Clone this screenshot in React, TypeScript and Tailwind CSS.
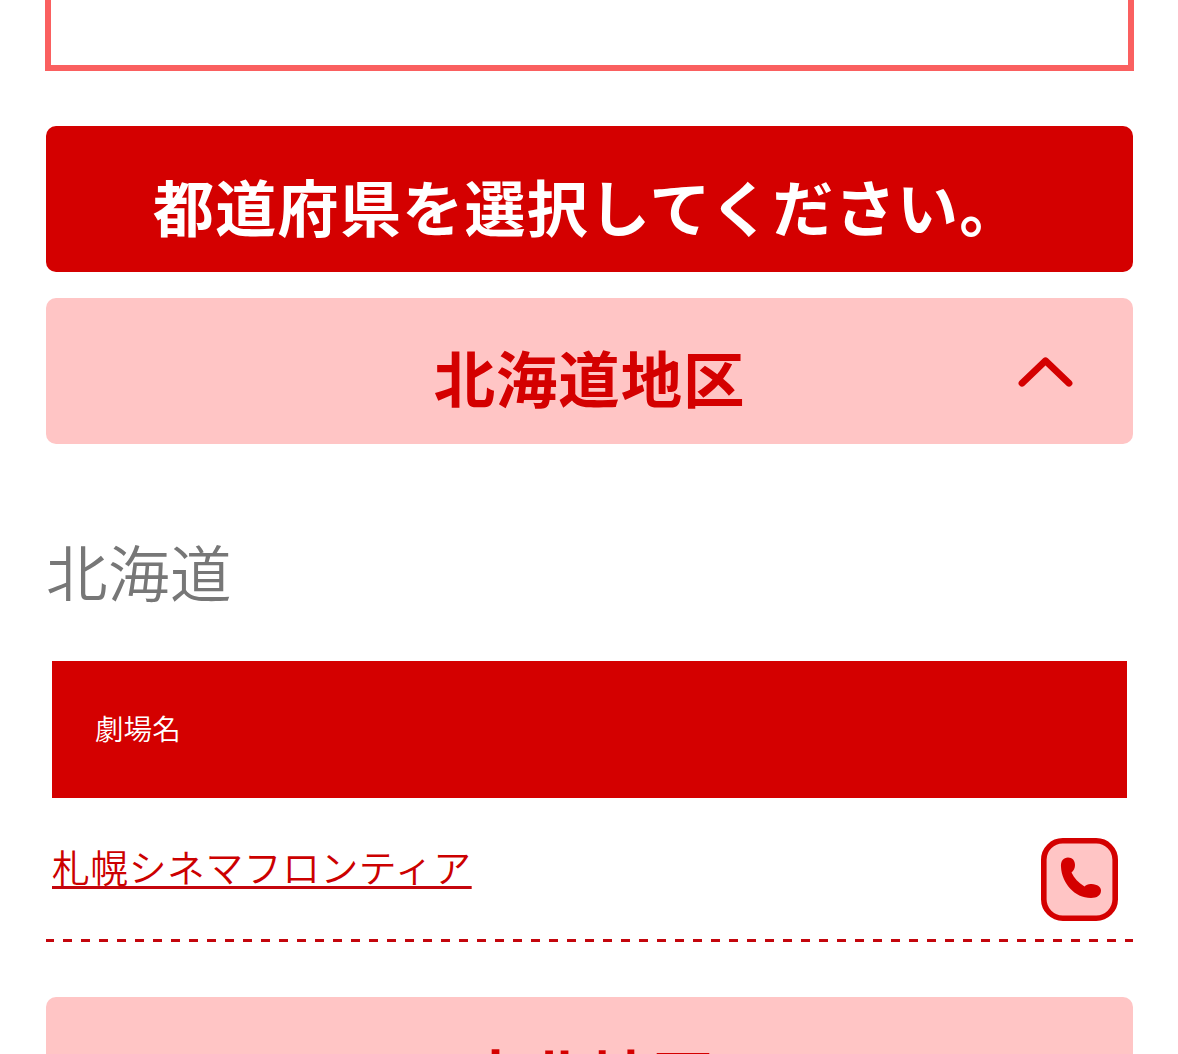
function ChevronUp() {
  return (
    <svg viewBox="0 0 56 32" className="h-[32px] w-[56px]" fill="none">
      <path d="M4 27.2 27.5 4.8 51 27.2" stroke="#d40000" strokeWidth="6.8" strokeLinecap="round" strokeLinejoin="round" />
    </svg>
  );
}

function PhoneIcon() {
  return (
    <svg viewBox="0 0 77 83" className="h-[83px] w-[77px]" fill="none">
      <rect x="2.8" y="2.8" width="71.4" height="77.4" rx="19" fill="#ffc5c5" stroke="#d40000" strokeWidth="5.6" />
      <path
        d="M20 29C19.5 23 22.5 19.5 27 19.5c4.500 0 7 3 7 7.500 0 3.500-1.200 5.500-3.500 7.500 2.500 5.500 7 10.500 13 14 1.500-1.800 4-2.700 7-2.500 6 .3 9.500 3 9.500 6.500 0 4.800-4 7.500-10 7.500C33.500 60 20.800 45 20 29Z"
        fill="#d40000"
      />
    </svg>
  );
}

function AreaHeading({ name, open = false }: { name: string; open?: boolean }) {
  return (
    <h2 className="grid h-[146px] grid-cols-[1fr_auto_1fr] rounded-[10px] bg-[#ffc5c5] text-[61.4px] leading-[158px] font-bold tracking-[0.9px] text-[#d40000]">
      <span />
      <span>{name}</span>
      {open && (
        <span className="flex justify-end pt-[58px] pr-[59px]">
          <ChevronUp />
        </span>
      )}
    </h2>
  );
}

export default function App() {
  return (
    <div className="h-[1054px] overflow-hidden bg-white pr-[45px] pl-[46px] font-['Noto_Sans_CJK_JP',sans-serif]">
      <div className="-mx-px h-[71px] border-6 border-t-0 border-[#fa6060]" />

      <h1 className="mt-[55px] h-[146px] rounded-[10px] bg-[#d40000] pl-[107px] text-[61px] leading-[160px] font-bold tracking-[1.3px] whitespace-nowrap text-white">
        都道府県を選択してください。
      </h1>

      <section className="mt-[26px]">
        <AreaHeading name="北海道地区" open />

        <h3 className="mt-[80px] h-[100px] text-[61.5px] leading-[94px] font-[350] tracking-[0.5px] text-[#777]">北海道</h3>

        <div className="mx-[6px] mt-[37px] h-[137px] bg-[#d40000] pl-[43px] text-[28.6px] leading-[134px] font-[350] text-white">
          劇場名
        </div>

        <div className="flex h-[141px] items-start justify-between pr-[15px] pl-[6px]">
          <a
            href="#"
            className="mt-[40px] text-[37.8px] leading-[56px] font-[350] tracking-[0.56px] text-[#cc0000] underline decoration-[#c4060d] decoration-[3px] underline-offset-[4px] [text-decoration-skip-ink:none]"
          >
            札幌シネマフロンティア
          </a>
          <a href="#" className="mt-[40px]">
            <PhoneIcon />
          </a>
        </div>
        <div className="h-[3px] bg-[repeating-linear-gradient(to_right,#c4060d_-1px,#c4060d_8px,transparent_8px,transparent_17px)]" />
      </section>

      <section className="mt-[55px]">
        <AreaHeading name="東北地区" />
      </section>
    </div>
  );
}
